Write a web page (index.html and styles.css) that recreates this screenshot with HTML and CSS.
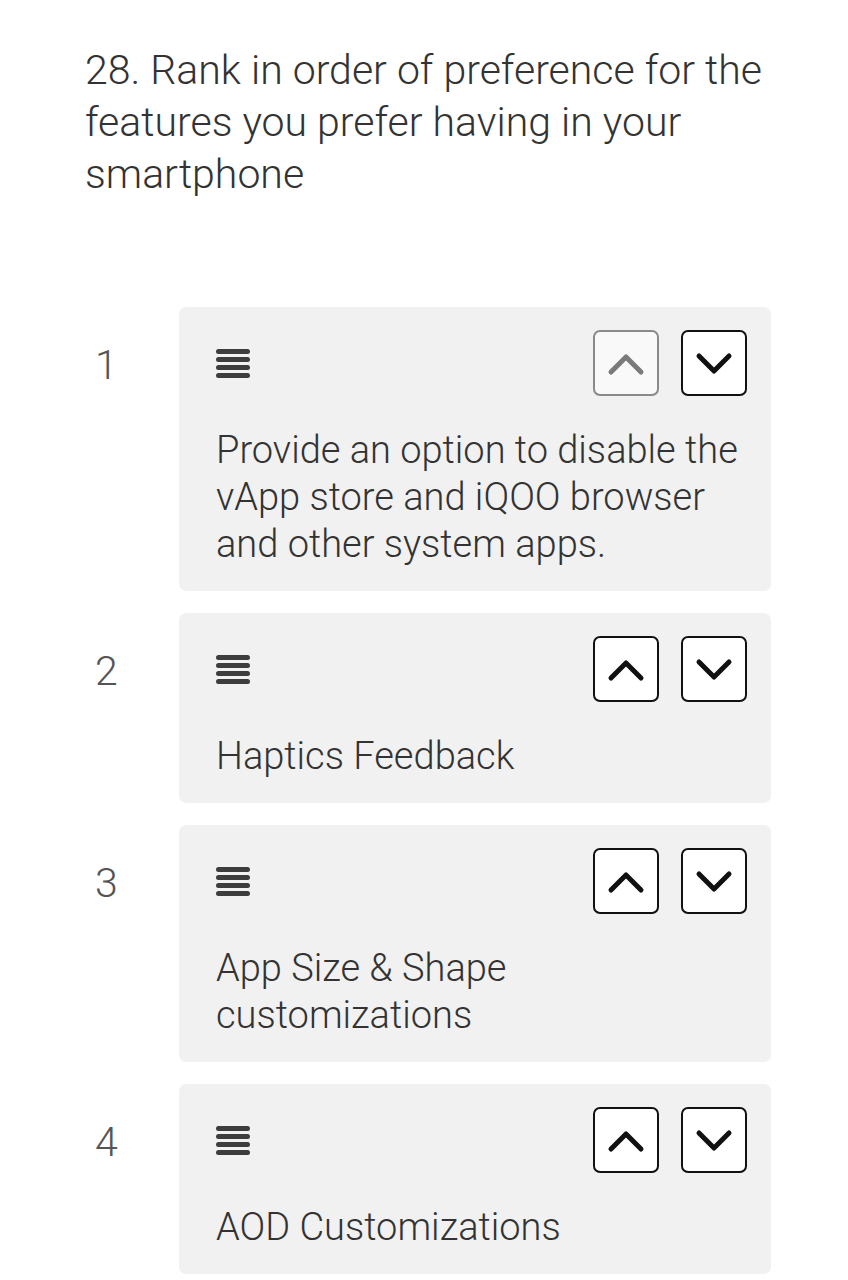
FILE: index.html
```html
<!DOCTYPE html>
<html lang="en">
<head>
<meta charset="utf-8">
<title>Ranking question</title>
<link rel="stylesheet" href="styles.css">
</head>
<body>
<main class="page">
  <h1 class="question">28. Rank in order of preference for the features you prefer having in your smartphone</h1>
  <ol class="rank-list">
    <li class="rank-row">
      <div class="rank-num">1</div>
      <div class="card">
        <div class="card-head">
          <svg class="handle" width="34" height="30" viewBox="0 0 34 30"><g stroke="#3d3d3d" stroke-width="5" stroke-linecap="round"><line x1="2.5" y1="3.5" x2="31.5" y2="3.5"/><line x1="2.5" y1="11.5" x2="31.5" y2="11.5"/><line x1="2.5" y1="19.5" x2="31.5" y2="19.5"/><line x1="2.5" y1="27.5" x2="31.5" y2="27.5"/></g></svg>
          <div class="btns">
            <button class="mv disabled"><svg width="62" height="62" viewBox="0 0 62 62"><polyline points="16,40 31,25 46,40" /></svg></button>
            <button class="mv"><svg width="62" height="62" viewBox="0 0 62 62"><polyline points="16,24 31,39 46,24" /></svg></button>
          </div>
        </div>
        <p class="label">Provide an option to disable the vApp store and iQOO browser and other system apps.</p>
      </div>
    </li>
    <li class="rank-row">
      <div class="rank-num">2</div>
      <div class="card">
        <div class="card-head">
          <svg class="handle" width="34" height="30" viewBox="0 0 34 30"><g stroke="#3d3d3d" stroke-width="5" stroke-linecap="round"><line x1="2.5" y1="3.5" x2="31.5" y2="3.5"/><line x1="2.5" y1="11.5" x2="31.5" y2="11.5"/><line x1="2.5" y1="19.5" x2="31.5" y2="19.5"/><line x1="2.5" y1="27.5" x2="31.5" y2="27.5"/></g></svg>
          <div class="btns">
            <button class="mv"><svg width="62" height="62" viewBox="0 0 62 62"><polyline points="16,40 31,25 46,40" /></svg></button>
            <button class="mv"><svg width="62" height="62" viewBox="0 0 62 62"><polyline points="16,24 31,39 46,24" /></svg></button>
          </div>
        </div>
        <p class="label">Haptics Feedback</p>
      </div>
    </li>
    <li class="rank-row">
      <div class="rank-num">3</div>
      <div class="card">
        <div class="card-head">
          <svg class="handle" width="34" height="30" viewBox="0 0 34 30"><g stroke="#3d3d3d" stroke-width="5" stroke-linecap="round"><line x1="2.5" y1="3.5" x2="31.5" y2="3.5"/><line x1="2.5" y1="11.5" x2="31.5" y2="11.5"/><line x1="2.5" y1="19.5" x2="31.5" y2="19.5"/><line x1="2.5" y1="27.5" x2="31.5" y2="27.5"/></g></svg>
          <div class="btns">
            <button class="mv"><svg width="62" height="62" viewBox="0 0 62 62"><polyline points="16,40 31,25 46,40" /></svg></button>
            <button class="mv"><svg width="62" height="62" viewBox="0 0 62 62"><polyline points="16,24 31,39 46,24" /></svg></button>
          </div>
        </div>
        <p class="label">App Size &amp; Shape customizations</p>
      </div>
    </li>
    <li class="rank-row">
      <div class="rank-num">4</div>
      <div class="card">
        <div class="card-head">
          <svg class="handle" width="34" height="30" viewBox="0 0 34 30"><g stroke="#3d3d3d" stroke-width="5" stroke-linecap="round"><line x1="2.5" y1="3.5" x2="31.5" y2="3.5"/><line x1="2.5" y1="11.5" x2="31.5" y2="11.5"/><line x1="2.5" y1="19.5" x2="31.5" y2="19.5"/><line x1="2.5" y1="27.5" x2="31.5" y2="27.5"/></g></svg>
          <div class="btns">
            <button class="mv"><svg width="62" height="62" viewBox="0 0 62 62"><polyline points="16,40 31,25 46,40" /></svg></button>
            <button class="mv"><svg width="62" height="62" viewBox="0 0 62 62"><polyline points="16,24 31,39 46,24" /></svg></button>
          </div>
        </div>
        <p class="label">AOD Customizations</p>
      </div>
    </li>
  </ol>
</main>
</body>
</html>
```
FILE: styles.css
```css
* { box-sizing: border-box; }
html, body { margin: 0; padding: 0; background: #fff; }
body { font-family: Roboto, "Liberation Sans", sans-serif; color: #333; }
.page { padding: 44px 77px 0 85px; }
.question {
  margin: 0;
  font-size: 41px;
  line-height: 52px;
  font-weight: 300;
  color: #333;
}
.rank-list {
  list-style: none;
  margin: 107px 0 0;
  padding: 0;
  display: flex;
  flex-direction: column;
  gap: 22px;
}
.rank-row { display: flex; align-items: flex-start; }
.rank-num {
  width: 94px;
  flex: none;
  height: 66px;
  margin-top: 25px;
  padding-left: 10px;
  display: flex;
  align-items: center;
  font-size: 41px;
  font-weight: 300;
  color: #555;
}
.card {
  flex: 1;
  background: #f1f1f1;
  border-radius: 7px;
  padding: 23px 24px 23px 37px;
}
.card-head {
  display: flex;
  justify-content: space-between;
  align-items: center;
  height: 66px;
}
.handle { display: block; }
.btns { display: flex; gap: 22px; }
.mv {
  width: 66px;
  height: 66px;
  padding: 0;
  margin: 0;
  border: 2px solid #111;
  border-radius: 7px;
  background: #fff;
  display: flex;
  align-items: center;
  justify-content: center;
}
.mv svg { display: block; }
.mv polyline {
  fill: none;
  stroke: #111;
  stroke-width: 5;
  stroke-linecap: round;
  stroke-linejoin: round;
}
.mv.disabled { border-color: #8a8a8a; background: #f9f9f9; }
.mv.disabled polyline { stroke: #7a7a7a; }
.label {
  margin: 31px 0 0;
  font-size: 38px;
  line-height: 47px;
  font-weight: 300;
  color: #333;
}
```
